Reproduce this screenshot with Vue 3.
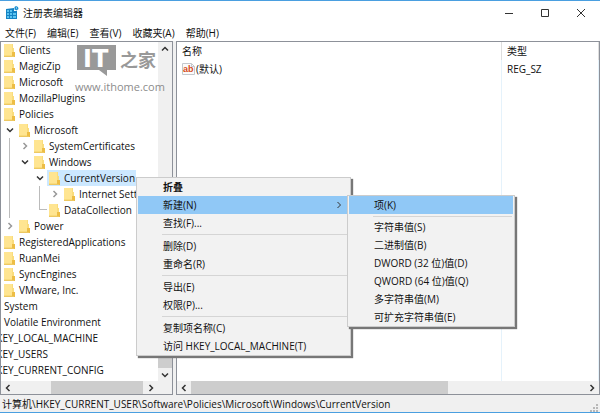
<script setup>
import { ref } from 'vue'

const menus = ['文件(F)', '编辑(E)', '查看(V)', '收藏夹(A)', '帮助(H)']

// Each guide is one indent column: open / closed expander, line, corner or blank.
const tree = [
  { name: 'Clients', guides: [] },
  { name: 'MagicZip', guides: [] },
  { name: 'Microsoft', guides: [] },
  { name: 'MozillaPlugins', guides: [] },
  { name: 'Policies', guides: [] },
  { name: 'Microsoft', guides: ['open'] },
  { name: 'SystemCertificates', guides: ['line', 'closed'] },
  { name: 'Windows', guides: ['line', 'open'] },
  { name: 'CurrentVersion', guides: ['line', 'blank', 'open'], selected: true },
  { name: 'Internet Settings', guides: ['line', 'blank', 'line', 'closed'] },
  { name: 'DataCollection', guides: ['line', 'blank', 'corner'] },
  { name: 'Power', guides: ['closed'] },
  { name: 'RegisteredApplications', guides: [] },
  { name: 'RuanMei', guides: [] },
  { name: 'SyncEngines', guides: [] },
  { name: 'VMware, Inc.', guides: [] },
  { name: 'System' },
  { name: 'Volatile Environment' },
  { name: 'HKEY_LOCAL_MACHINE', root: true },
  { name: 'HKEY_USERS', root: true },
  { name: 'HKEY_CURRENT_CONFIG', root: true }
]

const contextGroups = [
  ['折叠', '新建(N)', '查找(F)...'],
  ['删除(D)', '重命名(R)'],
  ['导出(E)', '权限(P)...'],
  ['复制项名称(C)', '访问 HKEY_LOCAL_MACHINE(T)']
]

const newGroups = [
  ['项(K)'],
  ['字符串值(S)', '二进制值(B)', 'DWORD (32 位)值(D)', 'QWORD (64 位)值(Q)', '多字符串值(M)', '可扩充字符串值(E)']
]

const active = ref('新建(N)')
const activeNew = ref('项(K)')
</script>

<template>
  <div class="window">
    <header class="titlebar">
      <svg class="app-icon" viewBox="0 0 13 14" aria-hidden="true">
        <path d="M0 3l8-1v3h3v8l-11 0z" fill="#1583c4" />
        <path d="M1 4h2v2H1zM4 4h2v2H4zM1 7h2v2H1zM4 7h2v2H4zM7 7h3v2H7zM1 10h2v2H1zM4 10h2v2H4zM7 10h3v2H7z" fill="#5cc4f0" />
        <path d="M10 0l2 1 .5 2-2 1.500-2-1L8.500 1z" fill="#1c8fd0" />
        <path d="M10 1.500h1v1h-1z" fill="#d8f2ff" />
      </svg>
      <h1>注册表编辑器</h1>
      <div class="controls">
        <button aria-label="最小化"><svg viewBox="0 0 10 10"><path d="M1 5.500h8" /></svg></button>
        <button aria-label="最大化"><svg viewBox="0 0 10 10"><path d="M1.500 1.500h7v7h-7z" /></svg></button>
        <button aria-label="关闭"><svg viewBox="0 0 10 10"><path d="M1 1l8 8M9 1l-8 8" /></svg></button>
      </div>
    </header>

    <nav class="menubar">
      <button v-for="m in menus" :key="m">{{ m }}</button>
    </nav>

    <main class="panes">
      <section class="pane">
        <div class="tree-area">
          <ul class="tree">
            <li v-for="(n, i) in tree" :key="i" :class="{ root: n.root }">
              <span v-for="(g, k) in n.guides" :key="k" class="guide" :class="g">
                <svg v-if="g === 'open'" viewBox="0 0 8 8"><path d="M1 2.500l3 3 3-3" /></svg>
                <svg v-if="g === 'closed'" class="shut" viewBox="0 0 8 8"><path d="M2.500 1l3 3-3 3" /></svg>
              </span>
              <span class="entry" :class="{ selected: n.selected }">
                <svg v-if="n.guides" class="folder" viewBox="0 0 11 13" aria-hidden="true">
                  <path d="M0 0h9v4h1v8H0z" fill="#f9dc7c" />
                  <path d="M0 0h8v11H0z" fill="#ffe591" />
                  <path d="M8 8h3v5H8z" fill="#edbd45" />
                  <path d="M0 12.500h10" stroke="#edc862" />
                </svg>
                <span class="label">{{ n.name }}</span>
              </span>
            </li>
          </ul>
          <div class="vbar">
            <button aria-label="向上滚动"><svg viewBox="0 0 8 8"><path d="M1 5.500l3-3 3 3" /></svg></button>
            <span class="track"></span>
            <span class="thumb"></span>
            <button aria-label="向下滚动"><svg viewBox="0 0 8 8"><path d="M1 2.500l3 3 3-3" /></svg></button>
          </div>
        </div>
        <div class="hbar tree-bar">
          <button aria-label="向左滚动"><svg viewBox="0 0 8 8"><path d="M5.500 1l-3 3 3 3" /></svg></button>
          <span class="thumb"></span>
          <button aria-label="向右滚动"><svg viewBox="0 0 8 8"><path d="M2.500 1l3 3-3 3" /></svg></button>
        </div>
      </section>

      <section class="pane">
        <div class="list">
          <table>
            <thead>
              <tr><th>名称</th><th class="type">类型</th></tr>
            </thead>
            <tbody>
              <tr class="value">
                <td>
                  <span class="value-name">
                    <svg class="string-icon" viewBox="0 0 13 12" aria-hidden="true">
                      <path d="M.5.5h9l3 3v8H.5z" fill="#fbfbfb" stroke="#c4c8cc" />
                      <path d="M9.500.5v3h3" fill="none" stroke="#c4c8cc" />
                      <text x="1" y="9">ab</text>
                    </svg>
                    <span>(默认)</span>
                  </span>
                </td>
                <td class="type">REG_SZ</td>
              </tr>
              <tr class="rest"><td></td><td class="type"></td></tr>
            </tbody>
          </table>
        </div>
        <div class="hbar list-bar">
          <button aria-label="向左滚动"><svg viewBox="0 0 8 8"><path d="M5.500 1l-3 3 3 3" /></svg></button>
          <span class="thumb"></span>
          <button aria-label="向右滚动"><svg viewBox="0 0 8 8"><path d="M2.500 1l3 3-3 3" /></svg></button>
        </div>
      </section>
    </main>

    <footer class="status">
      <span>计算机\HKEY_CURRENT_USER\Software\Policies\Microsoft\Windows\CurrentVersion</span>
      <svg class="grip" viewBox="0 0 8 8" aria-hidden="true">
        <path d="M6 0h2v2H6zM3 3h2v2H3zM6 3h2v2H6zM0 6h2v2H0zM3 6h2v2H3zM6 6h2v2H6z" fill="#b8b8b8" />
      </svg>
    </footer>

    <div class="watermark">
      <svg class="mark" viewBox="0 0 80 34">
        <path d="M0 0h39v25h-9v6l-8-6H0z" fill="#999" />
        <text class="it" x="6" y="22">IT</text>
        <text class="home" x="43" y="22">之家</text>
      </svg>
      <span>www.ithome.com</span>
    </div>

    <div class="popup context" role="menu">
      <ul v-for="(group, g) in contextGroups" :key="g">
        <li v-for="item in group" :key="item">
          <button role="menuitem" :class="{ active: item === active, strong: item === '折叠' }" @click="active = item">
            <span>{{ item }}</span>
            <svg v-if="item === '新建(N)'" viewBox="0 0 8 8"><path d="M2.500 1l3 3-3 3" /></svg>
          </button>
        </li>
      </ul>
    </div>

    <div class="popup submenu" role="menu">
      <ul v-for="(group, g) in newGroups" :key="g">
        <li v-for="item in group" :key="item">
          <button role="menuitem" :class="{ active: item === activeNew }" @click="activeNew = item">{{ item }}</button>
        </li>
      </ul>
    </div>
  </div>
</template>

<style>
body {
  margin: 0;
}
</style>

<style scoped>
.window {
  position: relative;
  box-sizing: border-box;
  display: flex;
  flex-direction: column;
  min-height: 100vh;
  border-top: 1px solid #4a9fe0;
  border-bottom: 1px solid #4a9fe0;
  background: #fff;
  color: #111;
  font: 10px/16px "Open Sans", "Noto Sans CJK SC", sans-serif;
  overflow: hidden;
}
button {
  margin: 0;
  padding: 0;
  border: 0;
  background: none;
  color: inherit;
  font: inherit;
}
ul {
  margin: 0;
  padding: 0;
  list-style: none;
}
svg {
  display: block;
  flex: none;
}
button svg,
.guide svg {
  width: 8px;
  height: 8px;
  fill: none;
  stroke: #333;
  stroke-width: 1.5;
}
.titlebar {
  display: flex;
  align-items: center;
  height: 24px;
  padding: 0 1px 0 6px;
}
.app-icon {
  width: 13px;
  height: 14px;
}
h1 {
  flex: 1;
  margin: 0 0 0 4px;
  font-size: 10px;
  font-weight: 400;
}
.controls {
  display: flex;
}
.controls button {
  display: grid;
  place-items: center;
  width: 36px;
  height: 24px;
}
.controls svg {
  width: 10px;
  height: 10px;
  stroke-width: 1;
}
.menubar {
  display: flex;
  gap: 11px;
  height: 16px;
  padding-left: 5px;
}
.panes {
  flex: 1;
  display: grid;
  grid-template-columns: 173px 1fr;
  gap: 3px;
  background: #f0f0f0;
}
.pane {
  display: flex;
  flex-direction: column;
  min-width: 0;
  border: 1px solid #8d9199;
  background: #fff;
}
.tree-area {
  flex: 1;
  display: flex;
}
.tree {
  flex: 1;
  min-width: 0;
  overflow: hidden;
}
.tree li {
  display: flex;
  height: 16px;
  padding-left: 1px;
  white-space: nowrap;
}
.guide {
  position: relative;
  flex: none;
  display: grid;
  place-items: center;
  width: 15px;
}
.guide.line::before,
.guide.corner::before {
  content: "";
  position: absolute;
  top: 0;
  bottom: 0;
  left: 7px;
  border-left: 1px solid #bbb;
}
.guide.corner::before {
  bottom: 8px;
  right: 0;
  border-bottom: 1px solid #bbb;
}
.guide .shut {
  stroke: #999;
}
.entry {
  display: flex;
  align-items: center;
  padding: 0 1px 0 2px;
}
.entry.selected {
  background: #cce8ff;
}
.folder {
  width: 11px;
  height: 13px;
  margin-right: 4px;
}
.root .label {
  margin-left: -15px;
}
.vbar {
  display: flex;
  flex-direction: column;
  width: 14px;
  background: #f0f0f0;
}
.vbar button,
.hbar button {
  flex: none;
  display: grid;
  place-items: center;
  width: 14px;
  height: 13px;
}
.vbar .track {
  flex: 3;
}
.vbar .thumb {
  flex: 2;
  background: #cdcdcd;
}
.hbar {
  display: flex;
  height: 13px;
  background: #f0f0f0;
}
.hbar .thumb {
  background: #cdcdcd;
}
.hbar button:last-child {
  margin-left: auto;
}
.tree-bar {
  padding-right: 14px;
}
.tree-bar .thumb {
  width: 92px;
  margin-left: 36px;
}
.list-bar .thumb {
  flex: 0 0 61%;
}
.list {
  flex: 1;
  display: grid;
}
table {
  width: 100%;
  height: 100%;
  border-collapse: collapse;
  table-layout: fixed;
}
th,
td {
  height: 18px;
  padding: 0 5px;
  font-weight: 400;
  text-align: left;
}
.type {
  width: 86px;
  border-left: 1px solid #e5f2fb;
  border-right: 1px solid #e5f2fb;
}
th.type {
  border-color: #dedede;
}
.rest td {
  height: auto;
}
.value {
  height: 18px;
}
.value-name {
  display: flex;
  align-items: center;
  gap: 1px;
}
.string-icon {
  width: 13px;
  height: 12px;
}
.string-icon text {
  fill: #d64a1c;
  font: bold 9px "Liberation Sans", sans-serif;
}
.status {
  display: flex;
  align-items: center;
  justify-content: space-between;
  height: 17px;
  padding: 0 2px;
  background: #f0f0f0;
}
.grip {
  width: 8px;
  height: 8px;
  align-self: flex-end;
}
.watermark {
  position: absolute;
  left: 75px;
  top: 44px;
  color: #8c8c8c;
  font-size: 11px;
  pointer-events: none;
}
.mark {
  width: 80px;
  height: 34px;
  margin-left: 2px;
}
.it {
  fill: #fff;
  font: bold 24px "DejaVu Sans", sans-serif;
}
.home {
  fill: #999;
  font: bold 18px "Noto Sans CJK SC", sans-serif;
}
.popup {
  position: absolute;
  box-sizing: border-box;
  padding: 0 1px;
  border: 1px solid #ccc;
  background: #f2f2f2;
  box-shadow: 2px 2px 1px #777;
}
.context {
  left: 136px;
  top: 176px;
  width: 215px;
}
.submenu {
  left: 347px;
  top: 194px;
  width: 168px;
}
.popup ul + ul::before {
  content: "";
  display: block;
  height: 1px;
  margin: 0 1px 0 24px;
  border: solid #f2f2f2;
  border-width: 2px 0;
  background: #d5d5d5;
}
.popup.submenu ul + ul::before {
  border-bottom-width: 1px;
}
.popup button {
  display: flex;
  align-items: center;
  justify-content: space-between;
  width: 100%;
  height: 18px;
  padding: 0 6px 0 25px;
  white-space: nowrap;
}
.popup button svg {
  stroke-width: 1;
}
.popup .active {
  background: #90c8f6;
}
.popup .strong {
  font-weight: 700;
}
</style>
